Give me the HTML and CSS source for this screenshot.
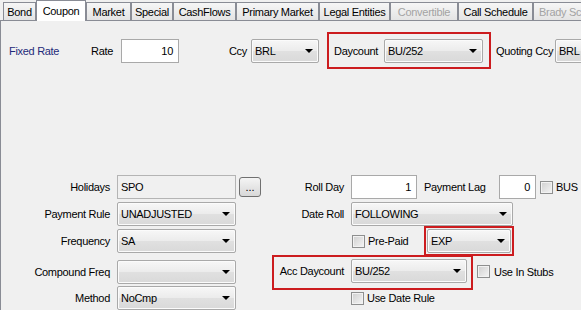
FILE: index.html
```html
<!DOCTYPE html>
<html lang="en">
<head>
  <meta charset="UTF-8">
  <title>Coupon</title>
  <link rel="stylesheet" href="styles.css">
</head>
<body>
<div class="tabs">
  <div class="tab t1">Bond</div>
  <div class="tab t2 current">Coupon</div>
  <div class="tab t3">Market</div>
  <div class="tab t4">Special</div>
  <div class="tab t5">CashFlows</div>
  <div class="tab t6">Primary Market</div>
  <div class="tab t7">Legal Entities</div>
  <div class="tab t8 disabled">Convertible</div>
  <div class="tab t9">Call Schedule</div>
  <div class="tab t10 disabled">Brady Schedule</div>
</div>

<div class="panel">
  <div class="top">
    <div class="fixed">Fixed Rate</div>
    <div class="rate-lbl">Rate</div>
    <div class="field num w58">10</div>
    <div class="ccy-lbl">Ccy</div>
    <div class="combo w68"><span>BRL</span><i class="arr"></i></div>
    <div class="redbox day-box">
      <div class="day-lbl">Daycount</div>
      <div class="combo w99"><span>BU/252</span><i class="arr"></i></div>
    </div>
    <div class="quot-lbl">Quoting Ccy</div>
    <div class="combo w80"><span>BRL</span><i class="arr"></i></div>
  </div>

  <div class="lower">
    <div class="row r1">
      <div class="left">
        <div class="lbl">Holidays</div>
        <div class="field ro w119">SPO</div>
        <div class="btn">...</div>
      </div>
      <div class="rlbl">Roll Day</div>
      <div class="field num w66">1</div>
      <div class="lag-lbl">Payment Lag</div>
      <div class="field num w37">0</div>
      <i class="chk bus"></i><span class="chk-text">BUS</span>
    </div>

    <div class="row r2">
      <div class="left">
        <div class="lbl">Payment Rule</div>
        <div class="combo w119"><span>UNADJUSTED</span><i class="arr"></i></div>
      </div>
      <div class="rlbl">Date Roll</div>
      <div class="combo w162"><span>FOLLOWING</span><i class="arr"></i></div>
    </div>

    <div class="row r3">
      <div class="left">
        <div class="lbl">Frequency</div>
        <div class="combo w119"><span>SA</span><i class="arr"></i></div>
      </div>
      <div class="rlbl"></div>
      <div class="chk-group">
        <i class="chk"></i><span class="chk-text">Pre-Paid</span>
      </div>
      <div class="redbox exp-box">
        <div class="combo w84"><span>EXP</span><i class="arr"></i></div>
      </div>
    </div>

    <div class="row r4">
      <div class="left">
        <div class="lbl">Compound Freq</div>
        <div class="combo w119"><span></span><i class="arr"></i></div>
      </div>
      <div class="redbox acc-box">
        <div class="acc-lbl">Acc Daycount</div>
        <div class="combo w116"><span>BU/252</span><i class="arr"></i></div>
      </div>
      <i class="chk stubs"></i><span class="chk-text">Use In Stubs</span>
    </div>

    <div class="row r5">
      <div class="left">
        <div class="lbl">Method</div>
        <div class="combo w119"><span>NoCmp</span><i class="arr"></i></div>
      </div>
      <div class="rlbl"></div>
      <i class="chk"></i><span class="chk-text">Use Date Rule</span>
    </div>
  </div>
</div>
</body>
</html>
```

FILE: styles.css
```css
* {
  margin: 0;
  padding: 0;
  box-sizing: border-box;
}

body {
  width: 581px;
  height: 310px;
  overflow: hidden;
  background: #f0f0f0;
  font-family: "Liberation Sans", Arial, sans-serif;
  font-size: 11px;
  letter-spacing: -0.3px;
  color: #000;
}

/* tab strip */
.tabs {
  display: flex;
  align-items: flex-end;
  height: 21px;
  padding-left: 3px;
  border-bottom: 1px solid #898c95;
}

.tab {
  flex: none;
  height: 18px;
  display: flex;
  align-items: center;
  justify-content: center;
  white-space: nowrap;
  border: 1px solid #898c95;
  border-bottom: 0;
  background: linear-gradient(#f6f6f6, #e4e4e4);
}

.tab.current {
  height: 21px;
  margin-bottom: -1px;
  background: #fff;
}

.tab.disabled {
  color: #a3a3a3;
}

.t1 { width: 33px; }
.t2 { width: 50px; }
.t3 { width: 45px; }
.t4 { width: 42px; }
.t5 { width: 63px; }
.t6 { width: 83px; }
.t7 { width: 71px; }
.t8 { width: 68px; }
.t9 { width: 75px; }
.t10 { width: 80px; justify-content: flex-start; padding-left: 5px; }

.panel {
  height: 289px;
  padding-top: 11px;
  border-left: 1px solid #898c95;
}

/* controls */
.field {
  flex: none;
  height: 24px;
  display: flex;
  align-items: center;
  padding: 0 3px;
  background: #fff;
  border: 1px solid #a9a9a9;
}

.field.num {
  justify-content: flex-end;
  padding-right: 5px;
}

.field.ro {
  background: #f0f0f0;
  border-color: #b4b4b4;
}

.combo {
  flex: none;
  height: 24px;
  display: flex;
  align-items: center;
  justify-content: space-between;
  padding: 0 5px 0 3px;
  border: 1px solid #a9a9a9;
  border-radius: 2px;
  background: linear-gradient(#f7f7f7, #ececec 48%, #e0e0e0 52%, #d9d9d9);
  box-shadow: inset 0 0 0 1px #fbfbfb;
  white-space: nowrap;
}

.arr {
  width: 0;
  height: 0;
  border-left: 4px solid transparent;
  border-right: 4px solid transparent;
  border-top: 4px solid #000;
}

.btn {
  flex: none;
  width: 22px;
  height: 20px;
  margin-left: 3px;
  display: flex;
  align-items: flex-end;
  justify-content: center;
  padding-bottom: 3px;
  letter-spacing: 0;
  line-height: 1;
  border: 1px solid #707070;
  border-radius: 3px;
  background: linear-gradient(#f4f4f4, #e6e6e6 50%, #d8d8d8);
}

.chk {
  flex: none;
  width: 13px;
  height: 13px;
  border: 1px solid #8e8f8f;
  background: linear-gradient(135deg, #cfcfcf, #f5f5f5);
  box-shadow: inset 0 0 0 1px #f2f2f2;
}

.chk-text {
  margin-left: 3px;
  white-space: nowrap;
}

.redbox {
  flex: none;
  display: flex;
  align-items: center;
  border: 2px solid #cc1c1f;
}

.w37 { width: 37px; }
.w58 { width: 58px; }
.w66 { width: 66px; }
.w68 { width: 68px; }
.w80 { width: 80px; }
.w84 { width: 84px; }
.w99 { width: 99px; }
.w116 { width: 116px; }
.w119 { width: 119px; }
.w162 { width: 162px; }

/* top row */
.top {
  display: flex;
  align-items: center;
  height: 37px;
}

.fixed {
  flex: none;
  width: 90px;
  padding-left: 8px;
  color: #1f2a7a;
}

.rate-lbl {
  flex: none;
  width: 30px;
}

.ccy-lbl {
  flex: none;
  width: 72px;
  padding-right: 4px;
  text-align: right;
}

.day-box {
  margin-left: 8px;
  height: 37px;
  padding: 1px 6px 0 5px;
}

.day-lbl {
  flex: none;
  width: 50px;
}

.quot-lbl {
  flex: none;
  width: 64px;
  padding-left: 5px;
  white-space: nowrap;
}

/* lower block */
.lower {
  margin-top: 105px;
}

.row {
  display: flex;
  align-items: center;
}

.r1 { height: 26px; }
.r2 { height: 27px; }
.r3 { height: 28px; }
.r4 { height: 33px; }
.r5 { height: 20px; }

.left {
  flex: none;
  width: 260px;
  display: flex;
  align-items: center;
}

.left .lbl {
  flex: none;
  width: 109px;
  margin-right: 7px;
  text-align: right;
  white-space: nowrap;
}

.rlbl {
  flex: none;
  width: 83px;
  margin-right: 7px;
  text-align: right;
}

.lag-lbl {
  flex: none;
  width: 75px;
  margin-left: 7px;
}

.bus {
  margin-left: 4px;
}

.chk-group {
  flex: none;
  width: 73px;
  display: flex;
  align-items: center;
  padding-left: 1px;
}

.exp-box {
  padding: 1px;
}

.acc-box {
  align-self: flex-start;
  margin-left: 11px;
  padding: 2px 4px 5px 0;
}

.acc-lbl {
  flex: none;
  width: 70px;
  margin-right: 7px;
  text-align: right;
  white-space: nowrap;
}

.stubs {
  margin-left: 4px;
}

.stubs + .chk-text {
  margin-left: 4px;
}
```
